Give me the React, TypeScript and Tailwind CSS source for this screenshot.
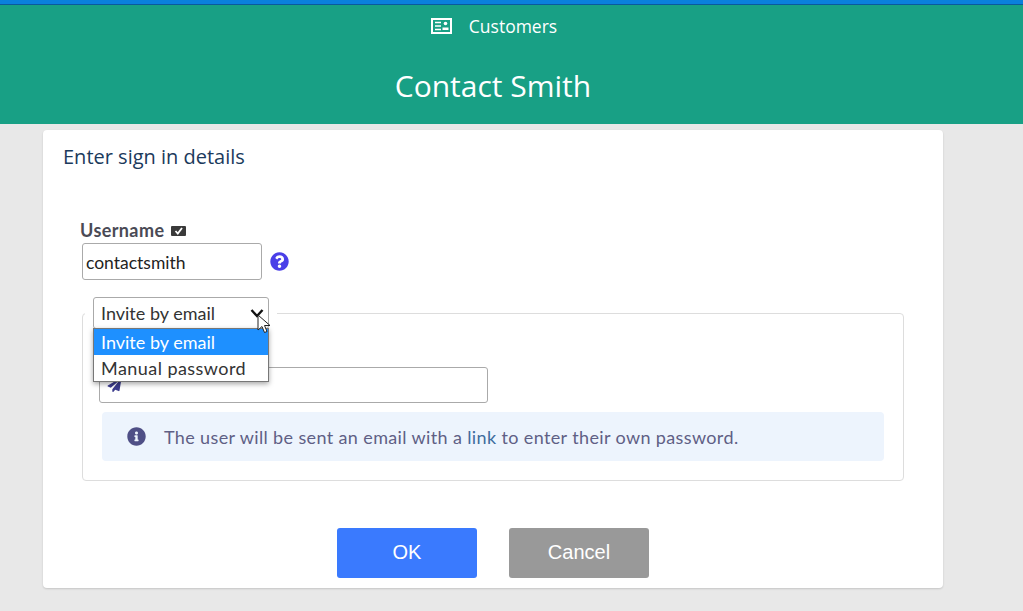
import React from 'react';
import { FaQuestionCircle, FaInfoCircle, FaPaperPlane } from 'react-icons/fa';

const bodyFont = "font-['Lato','Open_Sans',sans-serif]";

function CardIcon() {
  return (
    <svg width="21" height="16" viewBox="0 0 21 16" className="text-white">
      <rect x="1" y="1" width="19" height="14" fill="none" stroke="currentColor" strokeWidth="2" />
      <path d="M4 4.5h6M4 8h6M4 11.5h6" stroke="currentColor" strokeWidth="1.6" />
      <circle cx="14.5" cy="5.5" r="1.8" fill="currentColor" />
      <path d="M11.5 12v-2.5h6V12z" fill="currentColor" />
    </svg>
  );
}

function CheckBadge() {
  return (
    <svg width="15" height="10" viewBox="0 0 15 10" className="mt-[2px]">
      <rect width="15" height="10" rx="1" fill="#3a3a3a" />
      <path d="M4.5 5 L6.8 7.5 L11 2" fill="none" stroke="#fff" strokeWidth="1.8" />
    </svg>
  );
}

export default function App() {
  return (
    <div className="h-[611px] overflow-hidden bg-[#e8e8e8] font-['Open_Sans',sans-serif]">
      {/* Top strip */}
      <div className="h-[5px] border-b border-[#0a5a9c] bg-[#0a80dc]" />

      {/* Header */}
      <header className="flex h-[119px] flex-col items-center bg-[#18a085] pr-[37px] text-white">
        <div className="ml-[2px] mt-[9px] flex h-[24px] items-center gap-[17px] text-[17.5px] leading-[24px]">
          <CardIcon />
          <span>Customers</span>
        </div>
        <h1 className="mt-[26px] text-[30px] leading-[44px]">Contact Smith</h1>
      </header>

      {/* Card */}
      <main className="ml-[43px] mt-[6px] h-[458px] w-[900px] rounded-[4px] bg-white px-[39px] shadow-[0_1px_2px_rgba(0,0,0,0.15)]">
        <h2 className="-ml-[19px] pt-[14px] text-[20px] leading-[26px] text-[#1b3a5c]">Enter sign in details</h2>

        <div className={`${bodyFont} -ml-[2px] mt-[47px] flex h-[26px] items-center gap-[7px] text-[18px] font-bold tracking-[0.4px] text-[#4a4a55]`}>
          <span>Username</span>
          <CheckBadge />
        </div>

        <div className={`${bodyFont} flex items-center gap-[8px]`}>
          <input
            readOnly
            value="contactsmith"
            className="h-[37px] w-[180px] rounded-[3px] border border-[#aaa] bg-white px-[3px] pt-[2px] text-[17.5px] text-[#222] outline-none"
          />
          <FaQuestionCircle className="h-[19px] w-[19px] text-[#4a3fe8]" />
        </div>

        <fieldset className={`${bodyFont} mt-[18px] h-[183px] w-[822px] rounded-[4px] border border-[#ddd]`}>
          <legend className="ml-[2px] px-[8px]">
            <div className="relative h-[31px] w-[176px]">
              <div className="-mt-[1px] flex h-[32px] items-center justify-between rounded-[3px] border border-[#aaa] bg-white pl-[7px] pr-[4px] text-[18px] text-[#333]">
                <span>Invite by email</span>
                <svg width="14" height="10" viewBox="0 0 14 10" fill="none" stroke="#111" strokeWidth="2.4">
                  <path d="M1.5 2 L7 8 L12.5 2" />
                </svg>
              </div>

              {/* Open dropdown */}
              <div className="absolute left-0 top-[31px] z-10 w-[176px] border border-[#777] bg-white text-[18px] leading-[26px] text-[#333] shadow-[0_2px_5px_rgba(0,0,0,0.35)]">
                <div className="bg-[#1e90ff] pl-[7px] text-white">Invite by email</div>
                <div className="pl-[7px] tracking-[0.45px]">Manual password</div>
              </div>

              {/* Mouse pointer */}
              <svg className="absolute left-[164px] top-[17px] z-20" width="15" height="20" viewBox="0 0 15 20">
                <path d="M1 1 L1 16 L5 12.5 L7.5 18.5 L10 17.5 L7.5 11.5 L13 11.5 Z" fill="#fff" stroke="#222" strokeWidth="1" />
              </svg>
            </div>
          </legend>

          <div className="ml-[16px] mt-[39px] flex h-[36px] w-[389px] items-center rounded-[3px] border border-[#aaa] pl-[7px]">
            <FaPaperPlane className="h-[14px] w-[15px] text-[#3a3a8c]" />
          </div>

          <div className="ml-[19px] mt-[9px] flex h-[49px] w-[782px] items-center gap-[18px] rounded-[4px] bg-[#edf4fd] pl-[25px] text-[18px] tracking-[0.37px] text-[#5f5f85]">
            <FaInfoCircle className="h-[19px] w-[19px] text-[#4f4f86]" />
            <span className="pt-[1px]">
              The user will be sent an email with a <span className="text-[#3f6d9e]">link</span> to enter their own password.
            </span>
          </div>
        </fieldset>

        {/* Actions */}
        <div className="-mx-[39px] mt-[47px] flex justify-center gap-[32px] font-['Liberation_Sans',sans-serif] text-[20px] text-white">
          <button className="h-[50px] w-[140px] rounded-[3px] bg-[#3a7afe] pb-[2px]">OK</button>
          <button className="h-[50px] w-[140px] rounded-[3px] bg-[#999] pb-[2px]">Cancel</button>
        </div>
      </main>
    </div>
  );
}
